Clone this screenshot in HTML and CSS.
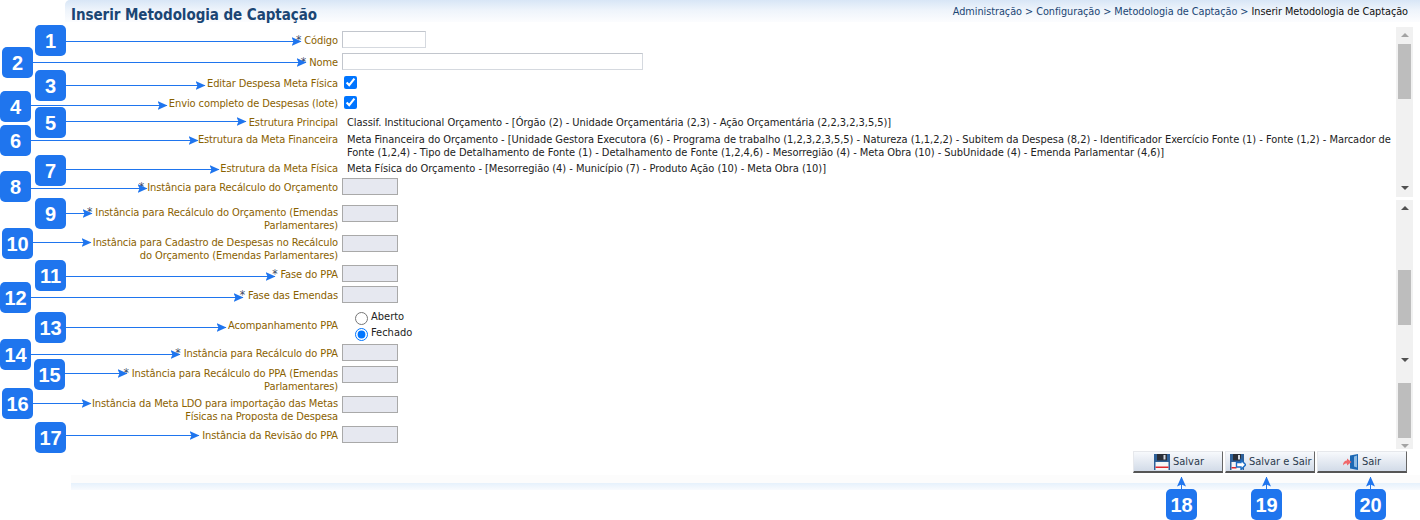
FILE: index.html
```html
<!DOCTYPE html>
<html lang="pt-BR">
<head>
<meta charset="utf-8">
<title>Inserir Metodologia de Captação</title>
<link rel="stylesheet" href="styles.css">
</head>
<body>
<div class="page">
  <header class="head">
    <h1 class="title">Inserir Metodologia de Captação</h1>
    <nav class="crumbs">Administração &gt; Configuração &gt; Metodologia de Captação &gt; <span class="crumb-current">Inserir Metodologia de Captação</span></nav>
  </header>

  <div class="content">
    <form class="form">
      <div class="row"><label class="lbl"><span class="req">*</span> Código</label><input class="inp inp-code" type="text"></div>
      <div class="row m5"><label class="lbl"><span class="req">*</span> Nome</label><input class="inp inp-name" type="text"></div>
      <div class="row m6"><label class="lbl">Editar Despesa Meta Física</label><input class="chk" type="checkbox" checked></div>
      <div class="row m7"><label class="lbl">Envio completo de Despesas (lote)</label><input class="chk" type="checkbox" checked></div>
      <div class="row m7"><label class="lbl lbl-top">Estrutura Principal</label><div class="val">Classif. Institucional Orçamento - [Órgão (2) - Unidade Orçamentária (2,3) - Ação Orçamentária (2,2,3,2,3,5,5)]</div></div>
      <div class="row m4"><label class="lbl lbl-top">Estrutura da Meta Financeira</label><div class="val">Meta Financeira do Orçamento - [Unidade Gestora Executora (6) - Programa de trabalho (1,2,3,2,3,5,5) - Natureza (1,1,2,2) - Subitem da Despesa (8,2) - Identificador Exercício Fonte (1) - Fonte (1,2) - Marcador de<br>Fonte (1,2,4) - Tipo de Detalhamento de Fonte (1) - Detalhamento de Fonte (1,2,4,6) - Mesorregião (4) - Meta Obra (10) - SubUnidade (4) - Emenda Parlamentar (4,6)]</div></div>
      <div class="row m3"><label class="lbl lbl-top">Estrutura da Meta Física</label><div class="val">Meta Física do Orçamento - [Mesorregião (4) - Município (7) - Produto Ação (10) - Meta Obra (10)]</div></div>
      <div class="row m3"><label class="lbl"><span class="req">*</span> Instância para Recálculo do Orçamento</label><input class="inp inp-ro" type="text" disabled></div>
      <div class="row m10"><label class="lbl"><span class="req">*</span> Instância para Recálculo do Orçamento (Emendas<br>Parlamentares)</label><input class="inp inp-ro" type="text" disabled></div>
      <div class="row m4"><label class="lbl">Instância para Cadastro de Despesas no Recálculo<br>do Orçamento (Emendas Parlamentares)</label><input class="inp inp-ro" type="text" disabled></div>
      <div class="row m4"><label class="lbl"><span class="req">*</span> Fase do PPA</label><input class="inp inp-ro" type="text" disabled></div>
      <div class="row m4"><label class="lbl"><span class="req">*</span> Fase das Emendas</label><input class="inp inp-ro" type="text" disabled></div>
      <div class="row m7"><label class="lbl lbl-mid">Acompanhamento PPA</label>
        <div class="radios">
          <label class="radio"><input class="rad" type="radio" name="ppa">Aberto</label>
          <label class="radio"><input class="rad" type="radio" name="ppa" checked>Fechado</label>
        </div>
      </div>
      <div class="row m2"><label class="lbl"><span class="req">*</span> Instância para Recálculo do PPA</label><input class="inp inp-ro" type="text" disabled></div>
      <div class="row m5"><label class="lbl"><span class="req">*</span> Instância para Recálculo do PPA (Emendas<br>Parlamentares)</label><input class="inp inp-ro" type="text" disabled></div>
      <div class="row m4"><label class="lbl">Instância da Meta LDO para importação das Metas<br>Físicas na Proposta de Despesa</label><input class="inp inp-ro" type="text" disabled></div>
      <div class="row m4"><label class="lbl">Instância da Revisão do PPA</label><input class="inp inp-ro" type="text" disabled></div>
    </form>

    <div class="scrolls">
      <div class="sb sb-a">
        <span class="tri tri-up tri-light"></span>
        <span class="thumb"></span>
        <span class="tri tri-down tri-a"></span>
      </div>
      <div class="sb sb-b">
        <span class="tri tri-up"></span>
        <span class="thumb thumb-b"></span>
        <span class="tri tri-down tri-b"></span>
        <span class="thumb thumb-c"></span>
        <span class="tri tri-down tri-light tri-c"></span>
      </div>
    </div>
  </div>

  <div class="actions">
    <button class="btn btn-save" type="button">
      <svg class="ico" viewBox="0 0 16 16"><path d="M0 0h16v16H0z" fill="#2f6199"/><path d="M3 0h10v6.500H3z" fill="#2b2f38"/><path d="M9.500 1h2v4.500h-2z" fill="#d5dbe3"/><path d="M1.500 8h13v8h-13z" fill="#f6f6f6"/><path d="M1.500 12.500h13V14h-13z" fill="#e0262c"/></svg>
      <span>Salvar</span>
    </button>
    <button class="btn btn-savexit" type="button">
      <svg class="ico" viewBox="0 0 16 16"><path d="M0 0h14v16H0z" fill="#2f6199"/><path d="M3 0h8v6.500H3z" fill="#2b2f38"/><path d="M8 1h2v4.500H8z" fill="#d5dbe3"/><path d="M1.500 8h11v8h-11z" fill="#f6f6f6"/><path d="M1.500 13h5v1.500h-5z" fill="#e0262c"/><path d="M6.500 8.500H11V6l4.700 4.800L11 15.600V13H6.500z" fill="#fff" stroke="#1a6cc4" stroke-width="1.400"/></svg>
      <span>Salvar e Sair</span>
    </button>
    <button class="btn btn-exit" type="button">
      <svg class="ico" viewBox="0 0 16 16"><path d="M7 1.500L15 0v16l-8-1.500z" fill="#1c68b4"/><path d="M11 2.500l3-1v12l-3-1z" fill="#8fbbe4"/><path d="M0 11.500C0 8 2 6.500 4 6.500V4.500l4.500 3.500L4 11.500V9.500c-2 0-3 .5-4 2z" fill="#f0686a"/></svg>
      <span>Sair</span>
    </button>
  </div>
  <div class="foot"></div>

  <!-- Anotações sobrepostas -->
  <svg class="arrows" viewBox="0 0 1420 520" aria-hidden="true">
    <defs>
      <marker id="head" viewBox="0 0 10 10" refX="9.500" refY="5" markerWidth="10" markerHeight="10" markerUnits="userSpaceOnUse" orient="auto"><path d="M0 .5L10 5 0 9.500 2 5z" fill="#1f75ee"/></marker>
    </defs>
    <g class="arrow-lines">
      <path d="M66 41.500H301"/><path d="M33 62.500H306"/><path d="M66 85.500H205"/><path d="M31 105.500H167"/>
      <path d="M66 121.500H246"/><path d="M31 140.500H198"/><path d="M66 169.500H219"/><path d="M31 188.500H147"/>
      <path d="M66 213.500H92"/><path d="M33 242.500H91"/><path d="M66 276.500H275"/><path d="M31 297.500H243"/>
      <path d="M66 327.500H226"/><path d="M31 354.500H180"/><path d="M65 373.500H127"/><path d="M33 403.500H91"/>
      <path d="M66 435.500H199"/><path d="M1181.500 489V477"/><path d="M1266.500 489V477"/><path d="M1370.500 489V477"/>
    </g>
  </svg>
  <span class="badge b1">1</span><span class="badge b2">2</span><span class="badge b3">3</span><span class="badge b4">4</span>
  <span class="badge b5">5</span><span class="badge b6">6</span><span class="badge b7">7</span><span class="badge b8">8</span>
  <span class="badge b9">9</span><span class="badge b10">10</span><span class="badge b11">11</span><span class="badge b12">12</span>
  <span class="badge b13">13</span><span class="badge b14">14</span><span class="badge b15">15</span><span class="badge b16">16</span>
  <span class="badge b17">17</span><span class="badge b18">18</span><span class="badge b19">19</span><span class="badge b20">20</span>
</div>
</body>
</html>
```

FILE: styles.css
```css
* { box-sizing: border-box; }
html, body { margin: 0; padding: 0; background: #fff; }
body { width: 1420px; height: 520px; overflow: hidden; font-family: "DejaVu Sans Condensed", "DejaVu Sans", Tahoma, sans-serif; font-size: 11px; line-height: 13px; }
.page { position: relative; width: 1420px; height: 520px; }

.head { display: flex; justify-content: space-between; align-items: flex-start; height: 22px; margin-left: 65px; padding: 5px 12px 0 6px; background: linear-gradient(#d8e6f6 0, #eef4fb 10px, #fbfcfe 21px); border-top-left-radius: 5px; }
.title { margin: 0; font-size: 15px; line-height: 20px; font-weight: bold; letter-spacing: -0.06px; color: #1b4674; }
.crumbs { font-size: 10.8px; line-height: 13px; letter-spacing: -0.04px; color: #1b4674; }
.crumb-current { color: #111; }

.content { position: relative; height: 429px; }
.form { width: 1395px; padding-top: 9px; }
.row { display: grid; grid-template-columns: 338px 1fr; column-gap: 4px; align-items: start; }
.m2 { margin-top: 2px; } .m3 { margin-top: 3px; } .m4 { margin-top: 4px; } .m5 { margin-top: 5px; }
.m6 { margin-top: 6px; } .m7 { margin-top: 7px; } .m10 { margin-top: 10px; }

.lbl { align-self: center; padding-top: 1px; margin-bottom: -1px; text-align: right; letter-spacing: -0.1px; color: #8a6100; white-space: nowrap; }
.lbl-top { align-self: start; padding-top: 0; margin-bottom: 0; }
.lbl-mid { margin-bottom: 3px; }
.req { font-size: 12px; line-height: 0; color: #3c4a63; }
.val { padding-left: 5px; letter-spacing: -0.04px; color: #222; white-space: nowrap; }

.inp { display: block; height: 17px; margin: 0; padding: 0; background: #fff; border: 1px solid #d5d9df; border-top-color: #c2c6cd; border-left-color: #c2c6cd; border-radius: 0; }
.inp-code { width: 84px; }
.inp-name { width: 301px; }
.inp-ro { width: 56px; background: #e6e8f0; border-color: #a9a9a9; }
.chk { display: block; width: 13px; height: 13px; margin: 0 0 0 2px; accent-color: #0075ff; }
.radios { display: flex; flex-direction: column; gap: 3px; height: 32px; padding-left: 13px; }
.radio { display: flex; align-items: center; height: 13px; color: #222; }
.rad { width: 13px; height: 13px; margin: 3px 3px 0 0; accent-color: #0075ff; }

.scrolls { position: absolute; top: 5px; left: 1396px; display: flex; flex-direction: column; gap: 3px; }
.sb { position: relative; display: block; width: 17px; background: #f1f1f1; }
.sb-a { height: 170px; }
.sb-b { height: 249px; }
.thumb { position: absolute; left: 2px; width: 13px; height: 55px; background: #bdbdbd; top: 17px; }
.thumb-b { top: 70px; }
.thumb-c { top: 183px; }
.tri { position: absolute; left: 4.500px; width: 0; height: 0; border-left: 4px solid transparent; border-right: 4px solid transparent; }
.tri-up { top: 6px; border-bottom: 4px solid #505050; }
.tri-down { border-top: 4px solid #505050; }
.tri-light { border-bottom-color: #a3a3a3; border-top-color: #a3a3a3; }
.tri-a { top: 159px; }
.tri-b { top: 158px; }
.tri-c { top: 244px; }

.actions { display: flex; justify-content: flex-end; gap: 2px; height: 32px; padding: 0 13px 0 0; }
.btn { display: flex; align-items: center; justify-content: flex-start; gap: 3px; width: 90px; height: 22px; margin: 0; padding: 0; font: inherit; font-size: 11px; white-space: nowrap; color: #2a3a4d; background: linear-gradient(#f7f9fc, #d2dbe8); border: 1px solid #e6e8ec; border-bottom: 2px solid #555; border-right: 1px solid #666; border-radius: 0; }
.btn-save { padding-left: 20px; }
.btn-savexit { padding-left: 4px; }
.btn-exit { padding-left: 25px; }
.ico { flex: none; width: 16px; height: 16px; }
.foot { height: 15px; margin-top: -8px; margin-left: 71px; background: linear-gradient(#fcfcfc 8px, #e6f1fc 8px, #f8fbfe 15px); }

.arrows { position: absolute; top: 0; left: 0; width: 1420px; height: 520px; pointer-events: none; }
.arrow-lines path { fill: none; stroke: #1f75ee; stroke-width: 1; marker-end: url(#head); }

.badge { position: absolute; display: flex; align-items: center; justify-content: center; width: 31px; height: 31px; background: #1f75ee; border-radius: 5px; color: #fff; font-family: "Liberation Sans", Arial, sans-serif; font-weight: bold; font-size: 20px; line-height: 1; }
.b1 { left: 35px; top: 25px; } .b2 { left: 2px; top: 47px; } .b3 { left: 35px; top: 70px; } .b4 { left: 0; top: 91px; }
.b5 { left: 35px; top: 107px; } .b6 { left: 0; top: 125px; } .b7 { left: 35px; top: 155px; } .b8 { left: 0; top: 171px; }
.b9 { left: 35px; top: 198px; } .b10 { left: 2px; top: 228px; } .b11 { left: 35px; top: 260px; } .b12 { left: 0; top: 282px; }
.b13 { left: 35px; top: 312px; } .b14 { left: 0; top: 339px; } .b15 { left: 34px; top: 359px; } .b16 { left: 2px; top: 388px; }
.b17 { left: 35px; top: 422px; } .b18 { left: 1166px; top: 489px; } .b19 { left: 1251px; top: 489px; } .b20 { left: 1355px; top: 489px; }
```
